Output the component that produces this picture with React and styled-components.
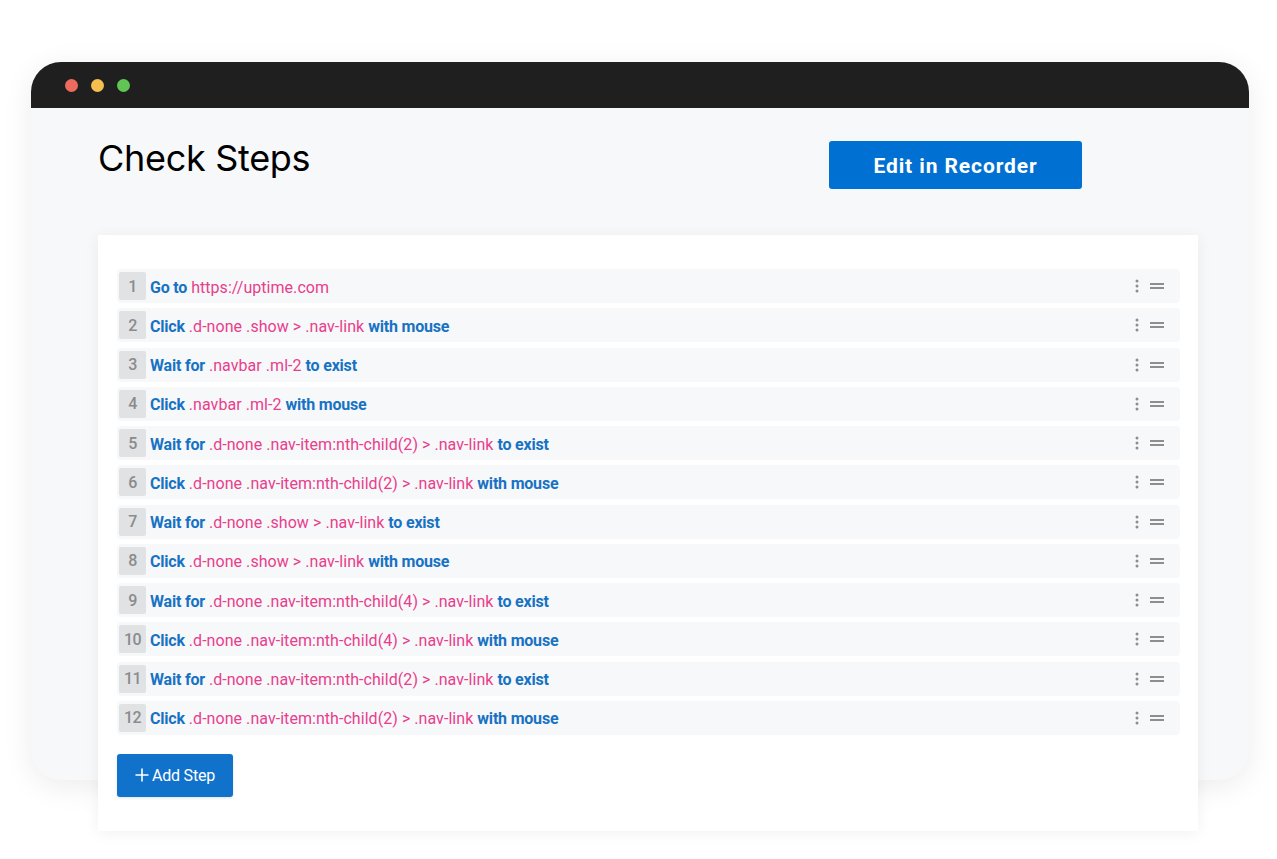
import React from "react";
import styled, { createGlobalStyle } from "styled-components";

const Global = createGlobalStyle`
  html, body { margin: 0; padding: 0; background: #ffffff; }
  body { font-family: Roboto, "Noto Sans", sans-serif; }
  * { box-sizing: border-box; }
`;

const Page = styled.div`
  width: 1277px;
  height: 859px;
  padding: 62px 0 0 31px;
  overflow: hidden;
`;

const Window = styled.div`
  width: 1218px;
  height: 718px;
  border-radius: 30px;
  background: #f7f8fa;
  box-shadow: 0 6px 30px rgba(0, 0, 0, 0.08);
  display: flex;
  flex-direction: column;
`;

const TitleBar = styled.div`
  height: 46px;
  flex: none;
  background: #1f1f1f;
  border-radius: 30px 30px 0 0;
  display: flex;
  align-items: center;
  gap: 13px;
  padding: 0 0 0 34px;
`;

const Dot = styled.span`
  width: 13px;
  height: 13px;
  border-radius: 50%;
  background: ${(p) => p.$c};
`;

const Content = styled.div`
  padding: 33px 0 0 67px;
`;

const Header = styled.div`
  width: 984px;
  height: 48px;
  display: flex;
  justify-content: space-between;
  align-items: flex-start;
`;

const Title = styled.h1`
  margin: -3px 0 0 0;
  font-family: Inter, "Noto Sans", sans-serif;
  font-weight: 400;
  font-size: 36px;
  line-height: 40px;
  color: #000;
  letter-spacing: -0.3px;
`;

const PrimaryButton = styled.button`
  width: 253px;
  height: 48px;
  border: none;
  border-radius: 3px;
  background: #0070d2;
  color: #fff;
  font-family: Roboto, sans-serif;
  font-weight: 700;
  font-size: 21px;
  letter-spacing: 0.9px;
  padding-top: 2px;
  cursor: pointer;
`;

const Card = styled.div`
  margin-top: 46px;
  width: 1100px;
  height: 596px;
  background: #fff;
  box-shadow: 0 2px 14px rgba(0, 0, 0, 0.06);
  padding: 34px 18px 0 19px;
  display: flex;
  flex-direction: column;
`;

const StepList = styled.div`
  display: flex;
  flex-direction: column;
  gap: 5.27px;
`;

const Row = styled.div`
  height: 34px;
  border-radius: 4px;
  background: #f7f8fa;
  display: flex;
  align-items: center;
  padding: 0 16px 0 2px;
`;

const Num = styled.span`
  width: 27px;
  height: 28px;
  border-radius: 2px;
  background: #e1e2e4;
  color: #8a8b8d;
  font-size: 16px;
  font-weight: 500;
  display: flex;
  align-items: center;
  justify-content: center;
  flex: none;
  letter-spacing: -0.5px;
`;

const Text = styled.span`
  margin-left: 4px;
  padding-top: 2px;
  flex: 1;
  font-size: 16px;
  white-space: nowrap;
`;

const Kw = styled.span`
  color: #1872c4;
  font-weight: 700;
  letter-spacing: -0.2px;
`;

const Sel = styled.span`
  color: #e83e8c;
  font-weight: 400;
  letter-spacing: 0.05px;
`;

const Icons = styled.div`
  display: flex;
  align-items: center;
  gap: 11px;
  color: #8d8e90;
`;

const AddButton = styled.button`
  margin-top: 19px;
  width: 116px;
  height: 43px;
  border: none;
  border-radius: 3px;
  background: #1172cc;
  color: #fff;
  font-family: Roboto, sans-serif;
  font-size: 16px;
  display: flex;
  align-items: center;
  justify-content: center;
  gap: 3px;
  box-shadow: 0 1px 3px rgba(0, 0, 0, 0.12);
  letter-spacing: -0.2px;
`;

const Kebab = () => (
  <svg width="4" height="14" viewBox="0 0 4 14">
    <circle cx="2" cy="2" r="1.5" fill="currentColor" />
    <circle cx="2" cy="7" r="1.5" fill="currentColor" />
    <circle cx="2" cy="12" r="1.5" fill="currentColor" />
  </svg>
);

const Grip = () => (
  <svg width="14" height="8" viewBox="0 0 14 8">
    <rect x="0" y="1" width="14" height="2" fill="currentColor" />
    <rect x="0" y="5" width="14" height="2" fill="currentColor" />
  </svg>
);

const Plus = () => (
  <svg width="14" height="14" viewBox="0 0 14 14">
    <path d="M7 0.5v13M0.5 7h13" stroke="#fff" strokeWidth="1.6" />
  </svg>
);

const steps = [
  ["Go to", "https://uptime.com", ""],
  ["Click", ".d-none .show > .nav-link", "with mouse"],
  ["Wait for", ".navbar .ml-2", "to exist"],
  ["Click", ".navbar .ml-2", "with mouse"],
  ["Wait for", ".d-none .nav-item:nth-child(2) > .nav-link", "to exist"],
  ["Click", ".d-none .nav-item:nth-child(2) > .nav-link", "with mouse"],
  ["Wait for", ".d-none .show > .nav-link", "to exist"],
  ["Click", ".d-none .show > .nav-link", "with mouse"],
  ["Wait for", ".d-none .nav-item:nth-child(4) > .nav-link", "to exist"],
  ["Click", ".d-none .nav-item:nth-child(4) > .nav-link", "with mouse"],
  ["Wait for", ".d-none .nav-item:nth-child(2) > .nav-link", "to exist"],
  ["Click", ".d-none .nav-item:nth-child(2) > .nav-link", "with mouse"],
];

export default function App() {
  return (
    <>
      <Global />
      <Page>
        <Window>
          <TitleBar>
            <Dot $c="#ec6a5e" />
            <Dot $c="#f4bf4f" />
            <Dot $c="#61c554" />
          </TitleBar>
          <Content>
            <Header>
              <Title>Check Steps</Title>
              <PrimaryButton>Edit in Recorder</PrimaryButton>
            </Header>
            <Card>
              <StepList>
                {steps.map(([a, s, b], i) => (
                  <Row key={i}>
                    <Num>{i + 1}</Num>
                    <Text>
                      <Kw>{a}</Kw> <Sel>{s}</Sel>
                      {b && (
                        <>
                          {" "}
                          <Kw>{b}</Kw>
                        </>
                      )}
                    </Text>
                    <Icons>
                      <Kebab />
                      <Grip />
                    </Icons>
                  </Row>
                ))}
              </StepList>
              <AddButton>
                <Plus />
                Add Step
              </AddButton>
            </Card>
          </Content>
        </Window>
      </Page>
    </>
  );
}
